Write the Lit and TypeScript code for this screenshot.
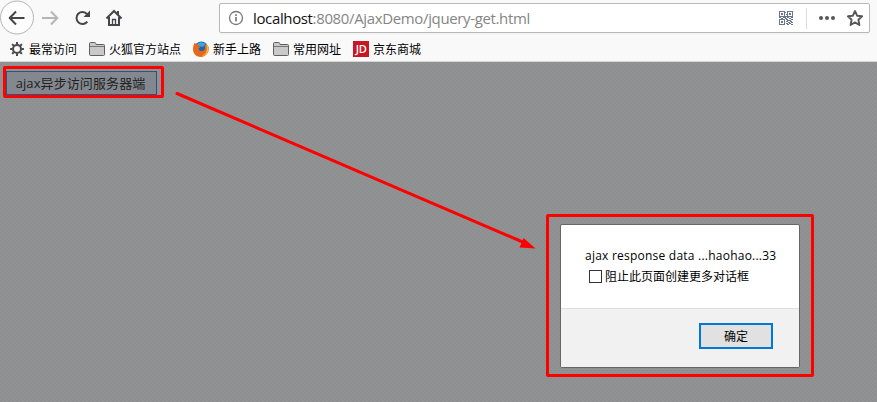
import { LitElement, html, css, svg } from "lit";
import { customElement } from "lit/decorators.js";

const gear = html`<svg class="icon" width="16" height="16" viewBox="0 0 16 16">
  <circle cx="8" cy="8" r="4" fill="none" stroke="#4a4a4d" stroke-width="2"></circle>
  ${[0, 45, 90, 135, 180, 225, 270, 315].map(
    (a) => svg`<path d="M8 1.100V3.400" stroke="#4a4a4d" stroke-width="2" transform="rotate(${a} 8 8)"></path>`
  )}
</svg>`;

const folder = html`<svg class="icon" width="16" height="16" viewBox="0 0 16 16">
  <path d="M.5 13.500V2.500q0-1 1-1h4.200q.8 0 1 .8l.4 1.200h7.400q1 0 1 1v9q0 1-1 1h-13q-1 0-1-1z" fill="#c9c9c9" stroke="#606060"></path>
  <path d="M1 5.500h14" stroke="#777"></path>
</svg>`;

const firefox = html`<svg class="icon" width="16" height="16" viewBox="0 0 16 16">
  <circle cx="8.300" cy="7.200" r="6.800" fill="#1d65b4"></circle>
  <path d="M4 3Q8-.6 12.500 3L10 6 6 5z" fill="#38a9df"></path>
  <path d="M1.700 1.800 3.600 3.300Q5 2.800 6 3.400L5.200 5l2.500.8-2 1.400c-.6 3 3 3.800 5 2.200 2-1.500 1.500-4 .5-6C14 4 14.200 6 14.300 8L15.500 5C17 11 13 16 8 16-.5 15.800-1.500 7.300 1.700 1.800z" fill="#e8681b"></path>
  <path d="M12.500 2.300Q16.700 6 15.200 10.500 13 15 8.700 14.700q4.800-1.800 5-6.200.2-3.600-1.200-6.200z" fill="#f9b934"></path>
</svg>`;

const jd = html`<span class="jd">JD</span>`;

const bookmarks = [
  { icon: gear, label: "最常访问" },
  { icon: folder, label: "火狐官方站点" },
  { icon: firefox, label: "新手上路" },
  { icon: folder, label: "常用网址" },
  { icon: jd, label: "京东商城" },
];

@customElement("browser-toolbar")
class BrowserToolbar extends LitElement {
  static styles = css`
    :host { display: block; height: 62px; background: #f9f9fa; border-bottom: 1px solid #d4d5d5; box-sizing: border-box; }
    svg { display: block; flex: none; }
    .nav { height: 37px; display: flex; align-items: flex-start; }
    .buttons { width: 219px; height: 36px; flex: none; }
    .url {
      box-sizing: border-box; width: 651px; height: 30px; margin-top: 3px; padding-left: 8px;
      border: 1px solid #b9b9ba; border-radius: 2px; background: #fff; display: flex; align-items: center;
      box-shadow: 0 1px 2px #0000000a;
    }
    .address { font: 15px "Open Sans", "Noto Sans", sans-serif; letter-spacing: -0.36px; color: #858585; margin-left: 9px; white-space: nowrap; flex: 1; }
    .host { color: #111; }
    .marks { display: flex; gap: 12px; padding-left: 9px; height: 24px; align-items: center; font: 12px/16px "Noto Sans CJK SC", sans-serif; color: #000; }
    .mark { display: flex; gap: 4px; align-items: center; white-space: nowrap; }
    .mark > span:last-child { margin-top: -1px; }
    .jd { width: 16px; height: 16px; background: #c81623; color: #fff; font: 600 11px/16px "Open Sans", sans-serif; text-align: center; letter-spacing: -0.4px; }
  `;
  render() {
    return html`
      <div class="nav">
        <svg class="buttons" width="219" height="36" viewBox="0 0 219 36" fill="none" stroke="#464649" stroke-width="2">
          <circle cx="17" cy="17.500" r="16.500" fill="#fdfdfd" stroke="#b4b4b5" stroke-width="1"></circle>
          <path d="M24.500 18H10.500M16 11.500 9.700 18 16 24.500" stroke-linejoin="round"></path>
          <path d="M42 18h14.500M51 11.500 57.300 18 51 24.500" stroke="#b5b5b6"></path>
          <path d="M87.300 21.600A6 6 0 1 1 87 14"></path>
          <path d="M90 10.500V17h-6.500z" fill="#464649" stroke="none"></path>
          <path d="M106.500 18.500 114 11l7.500 7.500M109 17v8h10v-8"></path>
          <path d="M118 11v4"></path>
          <path d="M112.500 25v-5.500h3v5.500" stroke-width="1.300"></path>
        </svg>
        <div class="url">
          <svg width="16" height="16" viewBox="0 0 16 16" fill="none" stroke="#77777a">
            <circle cx="8" cy="8" r="6.500" stroke-width="1.300"></circle>
            <path d="M8 7v4.500M8 4.200v1.800" stroke-width="1.700"></path>
          </svg>
          <div class="address"><span class="host">localhost</span>:8080/AjaxDemo/jquery-get.html</div>
          <svg width="92" height="28" viewBox="0 0 92 28">
            <g fill="none" stroke="#69758a" shape-rendering="crispEdges">
              <path d="M2.500 7.500h5v5h-5zM10.500 7.500h5v5h-5zM2.500 15.500h5v5h-5z"></path>
              <path d="M4 10h2M12 10h2M4 18h2" stroke-width="2"></path>
              <path d="M8 8.500h1M9 10.500h1M8 12.500h2M2 13.500h2M6 13.500h3M10 13.500h2M14 13.500h2M4 14.500h2M8 14.500h2M12 14.500h2M9 15.500h2M14 15.500h2M10 16.500h4M9 17.500h2M13 17.500h2M11 18.500h2M14 18.500h2M9 19.500h2M12 19.500h2M10 20.500h2M14 20.500h2"></path>
            </g>
            <path d="M29.500 4v21" stroke="#dcdcdc"></path>
            <g fill="#58585b"><circle cx="44" cy="14" r="2"></circle><circle cx="50" cy="14" r="2"></circle><circle cx="56" cy="14" r="2"></circle></g>
            <path d="m78 7 2.100 4.700 5 .6-3.700 3.400 1 5.300-4.400-2.600-4.400 2.600 1-5.300-3.700-3.400 5-.6z" fill="none" stroke="#58585b" stroke-width="1.900" stroke-linejoin="round"></path>
          </svg>
        </div>
      </div>
      <div class="marks">${bookmarks.map((b) => html`<div class="mark">${b.icon}<span>${b.label}</span></div>`)}</div>
    `;
  }
}

@customElement("alert-dialog")
class AlertDialog extends LitElement {
  static styles = css`
    :host { display: flex; flex-direction: column; box-sizing: border-box; width: 240px; height: 144px; border: 1px solid #666; border-radius: 2px; background: #fff; font: 12px/16px "Open Sans", "Noto Sans CJK SC", sans-serif; color: #000; overflow: hidden; }
    .body { flex: 1; padding: 23px 0 0 24px; white-space: nowrap; }
    .check { display: flex; align-items: center; gap: 3px; margin: 4px 0 0 4px; font-family: "Noto Sans CJK SC", sans-serif; }
    .box { box-sizing: border-box; width: 13px; height: 13px; border: 1px solid #333; background: #fff; }
    .message { letter-spacing: 0.23px; }
    .footer { box-sizing: border-box; height: 59px; background: #f1f1f1; border-top: 1px solid #dfdfdf; display: flex; justify-content: flex-end; padding: 14px 26px 0 0; }
    button { box-sizing: border-box; width: 74px; height: 26px; padding: 0; border: 2px solid #0078d7; background: #e1e1e1; color: #000; font: 12px/20px "Noto Sans CJK SC", sans-serif; }
  `;
  render() {
    return html`
      <div class="body">
        <div class="message">ajax response data ...haohao...33</div>
        <div class="check"><span class="box"></span><span>阻止此页面创建更多对话框</span></div>
      </div>
      <div class="footer"><button>确定</button></div>
    `;
  }
}

@customElement("app-root")
class AppRoot extends LitElement {
  static styles = css`
    :host { display: block; width: 877px; height: 402px; position: relative; overflow: hidden; }
    .page { box-sizing: border-box; height: 340px; padding: 4px 0 0 3px; background: repeating-conic-gradient(#8d8f91 0 25%, #919292 0 50%) 0 0 / 4px 4px; }
    .frame { box-sizing: border-box; border: 3px solid #f00; border-radius: 2px; }
    .request { width: 161px; height: 32px; padding: 2px 0 0 0; }
    .request button { display: block; box-sizing: border-box; width: 151px; height: 24px; padding: 0 2px 0 0; border: 1px solid #235681; background: #83888e; color: #222; font: 13px/20px "Open Sans", "Noto Sans CJK SC", sans-serif; letter-spacing: 0.1px; white-space: nowrap; }
    .arrow { position: absolute; left: 0; top: 0; pointer-events: none; }
    .popup { position: absolute; left: 546px; top: 214px; width: 268px; height: 163px; padding: 7px 0 0 11px; }
  `;
  render() {
    return html`
      <browser-toolbar></browser-toolbar>
      <div class="page"><div class="frame request"><button>ajax异步访问服务器端</button></div></div>
      <svg class="arrow" width="877" height="402" viewBox="0 0 877 402">
        <path d="M177 93.500 525 243" stroke="#f00" stroke-width="3" stroke-linecap="round"></path>
        <path d="M535.500 248.500 519.500 247.500 523.500 238z" fill="#f00"></path>
      </svg>
      <div class="frame popup"><alert-dialog></alert-dialog></div>
    `;
  }
}
